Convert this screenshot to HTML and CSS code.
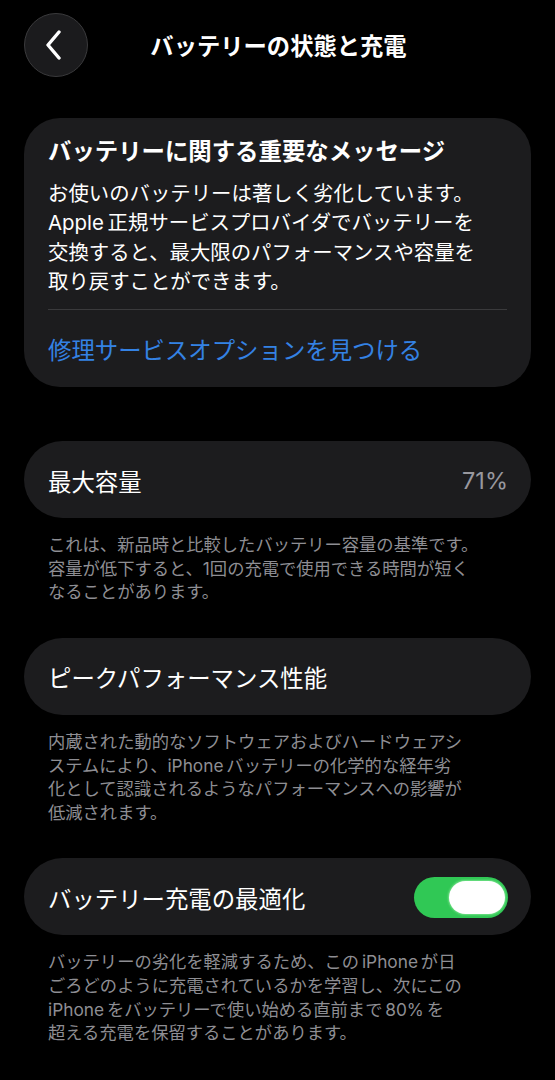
FILE: index.html
```html
<!DOCTYPE html>
<html lang="ja">
<head>
<meta charset="utf-8">
<link rel="stylesheet" href="styles.css">
</head>
<body>
<div class="screen">
  <header class="nav">
    <div class="back">
      <svg width="20" height="30" viewBox="0 0 20 30"><path d="M15 2 L4 15 L15 28" fill="none" stroke="#fff" stroke-width="3.4" stroke-linecap="round" stroke-linejoin="round"/></svg>
    </div>
    <div class="nav-title">バッテリーの状態と充電</div>
  </header>

  <section class="card msg">
    <div class="msg-head">バッテリーに関する重要なメッセージ</div>
    <div class="msg-body">お使いのバッテリーは著しく劣化しています。<br>Apple 正規サービスプロバイダでバッテリーを<br>交換すると、最大限のパフォーマンスや容量を<br>取り戻すことができます。</div>
    <div class="divider"></div>
    <div class="link">修理サービスオプションを見つける</div>
  </section>

  <section class="group first">
    <div class="card row">
      <span class="row-label">最大容量</span>
      <span class="row-value">71%</span>
    </div>
    <p class="foot">これは、新品時と比較したバッテリー容量の基準です。<br>容量が低下すると、1回の充電で使用できる時間が短く<br>なることがあります。</p>
  </section>

  <section class="group">
    <div class="card row">
      <span class="row-label">ピークパフォーマンス性能</span>
    </div>
    <p class="foot">内蔵された動的なソフトウェアおよびハードウェアシ<br>ステムにより、iPhone バッテリーの化学的な経年劣<br>化として認識されるようなパフォーマンスへの影響が<br>低減されます。</p>
  </section>

  <section class="group">
    <div class="card row">
      <span class="row-label">バッテリー充電の最適化</span>
      <span class="toggle"><span class="knob"></span></span>
    </div>
    <p class="foot">バッテリーの劣化を軽減するため、この iPhone が日<br>ごろどのように充電されているかを学習し、次にこの<br>iPhone をバッテリーで使い始める直前まで 80% を<br>超える充電を保留することがあります。</p>
  </section>
</div>
</body>
</html>
```

FILE: styles.css
```css
html, body {
  margin: 0;
  padding: 0;
  background: #000;
}
body {
  font-family: "Inter", "Noto Sans CJK JP", sans-serif;
  color: #fff;
  width: 555px;
  height: 1080px;
  overflow: hidden;
}
.screen {
  padding: 0 24px;
}
.nav {
  height: 64px;
  padding-top: 13px;
  display: flex;
  align-items: center;
}
.back {
  width: 62px;
  height: 62px;
  border-radius: 50%;
  background: #1b1b1d;
  border: 1px solid #3a3a3c;
  display: flex;
  align-items: center;
  justify-content: center;
  flex-shrink: 0;
}
.back svg {
  margin-left: -4px;
}
.nav-title {
  flex: 1;
  text-align: center;
  font-size: 23.3px;
  font-weight: 600;
  margin-left: -64px;
  padding-left: 2px;
}
.card {
  background: #1c1c1e;
}
.msg {
  margin-top: 41px;
  border-radius: 36px;
  padding: 19px 24px 0;
}
.msg-head {
  font-size: 23.4px;
  font-weight: 700;
  line-height: 30px;
  white-space: nowrap;
}
.msg-body {
  margin-top: 12px;
  font-size: 20.4px;
  line-height: 29.3px;
  white-space: nowrap;
  word-spacing: -2px;
}
.divider {
  margin-top: 13px;
  height: 1px;
  background: #3a3a3c;
}
.link {
  height: 77px;
  display: flex;
  align-items: center;
  font-size: 23.4px;
  color: #3482e4;
}
.group {
  margin-top: 34px;
}
.group.first {
  margin-top: 54px;
}
.row {
  height: 77px;
  border-radius: 39px;
  padding: 0 23px 0 24px;
  display: flex;
  align-items: center;
  justify-content: space-between;
}
.row-label {
  font-size: 23.4px;
  padding-top: 2px;
}
.row-value {
  font-size: 23.5px;
  color: #98989e;
  padding-top: 2px;
}
.foot {
  margin: 15px 0 0;
  padding-left: 24px;
  font-size: 17.3px;
  line-height: 23.6px;
  color: #8e8e93;
  white-space: nowrap;
  word-spacing: -2px;
}
.toggle {
  width: 94px;
  height: 41px;
  border-radius: 21px;
  background: #30c855;
  display: flex;
  align-items: center;
  justify-content: flex-end;
  padding-right: 3px;
  box-sizing: border-box;
  margin-top: 2px;
}
.knob {
  width: 56px;
  height: 33px;
  border-radius: 17px;
  background: #fff;
  box-shadow: 0 0 2px 1px rgba(160, 240, 170, 0.6);
}
```
